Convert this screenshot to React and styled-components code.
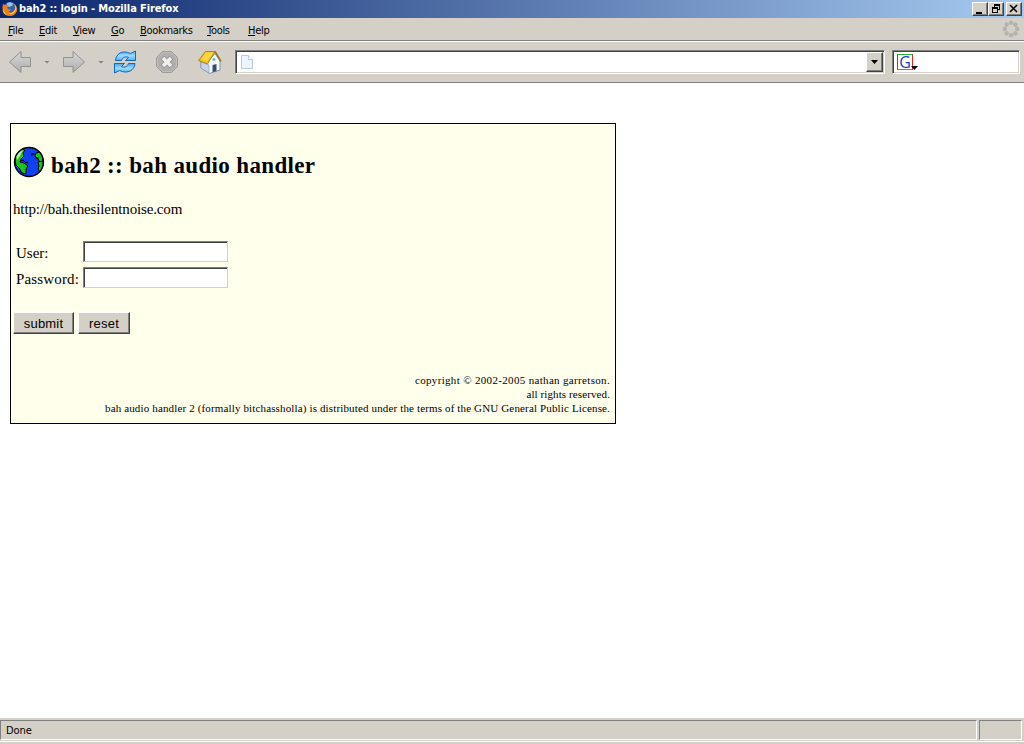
import React from 'react';
import styled, { createGlobalStyle } from 'styled-components';

const GlobalStyle = createGlobalStyle`
  * { box-sizing: border-box; }
  html, body { margin: 0; padding: 0; background: #fff; overflow: hidden; }
`;

const ui = `"DejaVu Sans Condensed", "DejaVu Sans", sans-serif`;
const face = '#d4d0c8';

const Window = styled.div`
  width: 1024px;
  height: 744px;
  display: flex;
  flex-direction: column;
  background: #fff;
  color: #000;
`;

const TitleBar = styled.header`
  height: 18px;
  display: flex;
  align-items: center;
  padding: 0 2px 1px 2px;
  background: linear-gradient(90deg, #0a246a, #a6caf0);
`;

const Title = styled.span`
  flex: 1;
  margin-left: 1px;
  padding-top: 1px;
  color: #fff;
  font: bold 11px/14px ${ui};
  letter-spacing: ${p => p.$spacing};
  white-space: nowrap;
`;

const CaptionButton = styled.span`
  width: 16px;
  height: 14px;
  margin-left: ${p => p.$gap || 0}px;
  border: 1px solid;
  border-color: #fff #404040 #404040 #fff;
  box-shadow: inset -1px -1px #808080;
  background: ${face};
  svg { display: block; }
`;

const MenuBar = styled.nav`
  height: 23px;
  display: flex;
  align-items: center;
  padding: 0 4px 0 8px;
  background: ${face};
  border-bottom: 1px solid #808080;
`;

const MenuItem = styled.span`
  width: ${p => p.$w}px;
  font: 11px/14px ${ui};
  letter-spacing: -0.3px;
  white-space: nowrap;
  padding-top: 3px;
  u { text-underline-offset: 1px; text-decoration-thickness: 1px; }
`;

const Spacer = styled.span`
  flex: 1;
`;

const ToolBar = styled.div`
  height: 42px;
  display: flex;
  align-items: center;
  padding: 0 4px 0 8px;
  background: ${face};
  border-top: 1px solid #fff;
  border-bottom: 1px solid #808080;
`;

const Tool = styled.span`
  width: 26px;
  height: 26px;
  margin-right: ${p => p.$after}px;
  svg { display: block; }
`;

const Arrow = styled.span`
  width: 6px;
  height: 3px;
  margin-right: ${p => p.$after}px;
  background: #808080;
  clip-path: polygon(0 0, 100% 0, 50% 100%);
`;

const Sunken = styled.div`
  width: ${p => p.$w}px;
  height: 24px;
  display: flex;
  align-items: center;
  background: #fff;
  border: 1px solid;
  border-color: #808080 #fff #fff #808080;
  box-shadow: inset 1px 1px #404040, inset -1px -1px ${face};
`;

const AddressBox = styled(Sunken)`
  margin-right: 7px;
  padding: 1px 1px 1px 4px;
`;

const DropButton = styled.span`
  width: 17px;
  height: 20px;
  display: grid;
  place-items: center;
  background: ${face};
  border: 1px solid;
  border-color: #fff #404040 #404040 #fff;
  box-shadow: inset -1px -1px #808080;
`;

const SearchMark = styled.span`
  width: 16px;
  height: 16px;
  margin-left: 4px;
  border: 1px solid;
  border-color: #2bb32b #e82020 #2bb32b #3060d8;
  color: #1b3fc4;
  font: 16px/14px "Open Sans", sans-serif;
  text-align: center;
`;

const SearchArrow = styled.span`
  width: 7px;
  height: 4px;
  margin: 12px 0 0 -2px;
  background: #000;
  z-index: 1;
  clip-path: polygon(0 0, 100% 0, 50% 100%);
`;

const Page = styled.main`
  flex: 1;
  padding: 40px 0 0 10px;
  font-family: "Liberation Serif", serif;
`;

const Card = styled.section`
  width: 606px;
  height: 301px;
  display: flex;
  flex-direction: column;
  padding: 22px 5px 8px 2px;
  border: 1px solid #000;
  background: #ffffec;
`;

const Heading = styled.h1`
  height: 32px;
  display: flex;
  margin: 0;
  font-size: 23px;
  line-height: 40px;
  letter-spacing: 0.35px;
  white-space: nowrap;
  svg { flex: none; margin-right: 6px; }
`;

const SiteAddress = styled.p`
  margin: 22px 0 23px;
  font-size: 15px;
  line-height: 18px;
  letter-spacing: -0.14px;
`;

const Field = styled.label`
  height: 22px;
  display: flex;
  margin-bottom: 4px;
  padding-left: 3px;
`;

const FieldName = styled.span`
  width: 67px;
  font-size: 15px;
  line-height: 24px;
  letter-spacing: ${p => p.$spacing};
  white-space: nowrap;
`;

const Input = styled.input`
  width: 145px;
  height: 21px;
  padding: 0 3px;
  outline: 0;
  background: #fff;
  border: 1px solid;
  border-color: #808080 ${face} ${face} #808080;
  box-shadow: inset 1px 1px #404040;
  border-radius: 0;
`;

const Buttons = styled.div`
  display: flex;
  gap: 4px;
  margin-top: 19px;
`;

const Button = styled.button`
  width: ${p => p.$w}px;
  height: 22px;
  padding: 1px 0 0;
  background: ${face};
  border: 1px solid;
  border-color: #fff #404040 #404040 #fff;
  box-shadow: inset -1px -1px #808080;
  font: 13px/16px "Liberation Sans", Arial, sans-serif;
  letter-spacing: 0.2px;
  color: #000;
`;

const Legal = styled.footer`
  margin-top: auto;
  text-align: right;
  font-size: 11px;
  line-height: 14px;
`;

const LegalLine = styled.div`
  letter-spacing: ${p => p.$spacing};
  white-space: nowrap;
`;

const StatusBar = styled.footer`
  height: 26px;
  display: flex;
  flex-direction: column;
  padding-top: 2px;
  background: ${face};
`;

const StatusPanels = styled.div`
  display: flex;
  gap: 2px;
  height: 20px;
`;

const StatusPanel = styled.div`
  width: ${p => p.$w}px;
  padding-left: 5px;
  border: 1px solid;
  border-color: #808080 #fff #fff #808080;
  font: 11px/19px ${ui};
  letter-spacing: -0.1px;
`;

const StatusEdge = styled.div`
  height: 2px;
  margin-top: 1px;
  border-top: 1px solid #fff;
`;

const FirefoxIcon = () => (
  <svg width="16" height="16" viewBox="0 0 16 16">
    <circle cx="8" cy="8" r="6.7" fill="#2c65b5" />
    <path d="M5 2q4-2 7 1-2 0-2 2L7 6Q4 5 5 2z" fill="#8fc9ef" />
    <path d="M1 3l2 1q2-1 4 1L5 7q2 2 4 1-1 3-3 2 3 3 6 0 2-3 0-7 4 3 3 7-2 5-7 5Q2 15 .7 10 0 6 1 3z" fill="#ef7d16" />
    <path d="M12 3q3 4 0 7-2 3-6 2 3 2 6 0 3-3 2-7z" fill="#ffd050" />
    <path d="M1 5q0 6 4 9-4-1-4-5z" fill="#ffc344" />
  </svg>
);

const BackIcon = ({ flip }) => (
  <svg width="26" height="26" viewBox="0 0 26 26">
    <defs>
      <linearGradient id="steel" x2="0" y2="1">
        <stop stopColor="#d8d8d6" /><stop offset="1" stopColor="#adadab" />
      </linearGradient>
    </defs>
    <path transform={flip ? 'translate(26 0) scale(-1 1)' : undefined}
      d="M1.500 13L13 2.500v6h9.500v9H13v6z" fill="url(#steel)" stroke="#929290" strokeLinejoin="round" />
  </svg>
);

const ReloadIcon = () => (
  <svg width="26" height="26" viewBox="0 0 26 26">
    <defs>
      <linearGradient id="water" x2="0" y2="1">
        <stop stopColor="#4da2f0" /><stop offset=".5" stopColor="#9bdcff" /><stop offset="1" stopColor="#45b4f8" />
      </linearGradient>
    </defs>
    <g fill="url(#water)" stroke="#1764be" strokeWidth="1" strokeLinejoin="round">
      <path d="M3.500 11.500C4 5 10 .5 18.500 4.500L23.500 2v9.500H13.500l3-3C13 7 10.500 8.500 9.500 11.500z" />
      <path d="M23 14.500C22.500 21 16 25.500 7.500 21.500L2.500 24v-9.500h10l-3 3c3.500 1.500 6 0 7-3z" />
    </g>
  </svg>
);

const StopIcon = () => (
  <svg width="26" height="26" viewBox="0 0 26 26">
    <path d="M8.500 2.500h9l6 6v9l-6 6h-9l-6-6v-9z" fill="#b0afad" stroke="#9b9a98" />
    <path d="M9 3.500h8l5.500 5.500v8L17 22.500H9L3.500 17V9z" fill="none" stroke="#c4c3c0" strokeWidth=".8" />
    <path d="M8.500 8.500l9 9m0-9l-9 9" stroke="#94938f" strokeWidth="5" />
    <path d="M9 9l8 8m0-8l-8 8" stroke="#f1f0ed" strokeWidth="3.500" />
  </svg>
);

const HomeIcon = () => (
  <svg width="26" height="26" viewBox="0 0 26 26">
    <path d="M4 12v7l8.500 5.500 10.500-3.500V12l-5-7.500-7 8z" fill="#f4f8fd" stroke="#7f92ad" />
    <path d="M4 13l8 3v8l-8-5z" fill="#c4d5ec" stroke="#8295b3" strokeWidth=".6" />
    <path d="M8.500 2.500l9.500 0-7.500 12.500-9-3.500z" fill="#f3c21c" stroke="#9b7411" strokeWidth=".8" strokeLinejoin="round" />
    <path d="M9 3.500l7.500 0L10 12.500l-6-2z" fill="#ffdb50" opacity=".7" />
    <path d="M18 2.500l6 10" stroke="#9c7720" strokeWidth="1.600" />
    <path d="M15.500 16l4-1v7l-4 1.300z" fill="#3a4c68" />
    <circle cx="17" cy="10.500" r="1.400" fill="#54b8ed" />
  </svg>
);

const PageIcon = () => (
  <svg width="16" height="16" viewBox="0 0 16 16">
    <path d="M1.500 1.500h7l4 4v9h-11z" fill="#edf4ff" stroke="#b7c9e4" />
    <path d="M8.500 1.500v4h4" fill="#fff" stroke="#b7c9e4" />
  </svg>
);

const Throbber = () => (
  <svg width="18" height="18" viewBox="0 0 18 18">
    {[0, 45, 90, 135, 180, 225, 270, 315].map(a => (
      <circle key={a} cx="9" cy="2.800" r="2.200" fill="#b4b2ae" transform={`rotate(${a} 9 9)`} />
    ))}
  </svg>
);

const GlobeIcon = () => (
  <svg width="32" height="32" viewBox="0 0 32 32">
    <circle cx="16" cy="16" r="14.500" fill="#1040f0" />
    <path d="M9 3l3 1-2 3 1 3-3 3-1 3 4 1 4 3-2 3v5l-4-1-3-5-3-3-1-4 2-7z" fill="#19c51c" stroke="#000" />
    <path d="M3 10l4-5 3-1-3 6-3 4z" fill="#a6f5a0" />
    <path d="M7 15l3-1 2 2 3 1" fill="none" stroke="#000" />
    <path d="M23 7l4-1 2 4 1 5-3 1-2-3-3-3z" fill="#19c51c" stroke="#000" />
    <path d="M25 16l5-1v5l-3 6-2-3 1-3z" fill="#19c51c" stroke="#000" />
    <path d="M19 7v3M21 7v2M22 12h4" stroke="#000" />
    <circle cx="16" cy="16" r="14.500" fill="none" stroke="#000" strokeWidth="1.300" />
  </svg>
);

export default function App() {
  return (
    <Window>
      <GlobalStyle />
      <TitleBar>
        <FirefoxIcon />
        <Title $spacing="-0.12px">bah2 :: login - Mozilla Firefox</Title>
        <CaptionButton><svg width="14" height="12"><path d="M3 9h6v2H3z" /></svg></CaptionButton>
        <CaptionButton>
          <svg width="14" height="12" fill="none" stroke="#000">
            <path d="M5 1.500h6M5.500 1v3M10.500 1v6M8 6.500h3M5 2.500h6M3 4.500h6M3.500 4v6M8.500 4v6M3 9.500h6M3 5.500h6" />
          </svg>
        </CaptionButton>
        <CaptionButton $gap={2}>
          <svg width="14" height="12"><path d="M3 2l7 7M10 2L3 9" stroke="#000" strokeWidth="1.600" /></svg>
        </CaptionButton>
      </TitleBar>
      <MenuBar>
        <MenuItem $w={31}><u>F</u>ile</MenuItem>
        <MenuItem $w={34}><u>E</u>dit</MenuItem>
        <MenuItem $w={38}><u>V</u>iew</MenuItem>
        <MenuItem $w={29}><u>G</u>o</MenuItem>
        <MenuItem $w={67}><u>B</u>ookmarks</MenuItem>
        <MenuItem $w={41}><u>T</u>ools</MenuItem>
        <MenuItem $w={30}><u>H</u>elp</MenuItem>
        <Spacer />
        <Throbber />
      </MenuBar>
      <ToolBar>
        <Tool $after={10}><BackIcon /></Tool>
        <Arrow $after={10} />
        <Tool $after={12}><BackIcon flip /></Tool>
        <Arrow $after={8} />
        <Tool $after={16}><ReloadIcon /></Tool>
        <Tool $after={17}><StopIcon /></Tool>
        <Tool $after={12}><HomeIcon /></Tool>
        <AddressBox $w={650}>
          <PageIcon />
          <Spacer />
          <DropButton><svg width="7" height="4"><path d="M0 0h7L3.500 4z" /></svg></DropButton>
        </AddressBox>
        <Sunken $w={128}>
          <SearchMark>G</SearchMark>
          <SearchArrow />
        </Sunken>
      </ToolBar>
      <Page>
        <Card>
          <Heading><GlobeIcon />bah2 :: bah audio handler</Heading>
          <SiteAddress>http://bah.thesilentnoise.com</SiteAddress>
          <Field><FieldName $spacing="0px">User:</FieldName><Input /></Field>
          <Field><FieldName $spacing="0.15px">Password:</FieldName><Input type="password" /></Field>
          <Buttons>
            <Button $w={61}>submit</Button>
            <Button $w={52}>reset</Button>
          </Buttons>
          <Legal>
            <LegalLine $spacing="0.33px">copyright © 2002-2005 nathan garretson.</LegalLine>
            <LegalLine $spacing="0.1px">all rights reserved.</LegalLine>
            <LegalLine $spacing="0.145px">bah audio handler 2 (formally bitchassholla) is distributed under the terms of the GNU General Public License.</LegalLine>
          </Legal>
        </Card>
      </Page>
      <StatusBar>
        <StatusPanels>
          <StatusPanel $w={977}>Done</StatusPanel>
          <StatusPanel $w={43} />
        </StatusPanels>
        <StatusEdge />
      </StatusBar>
    </Window>
  );
}
